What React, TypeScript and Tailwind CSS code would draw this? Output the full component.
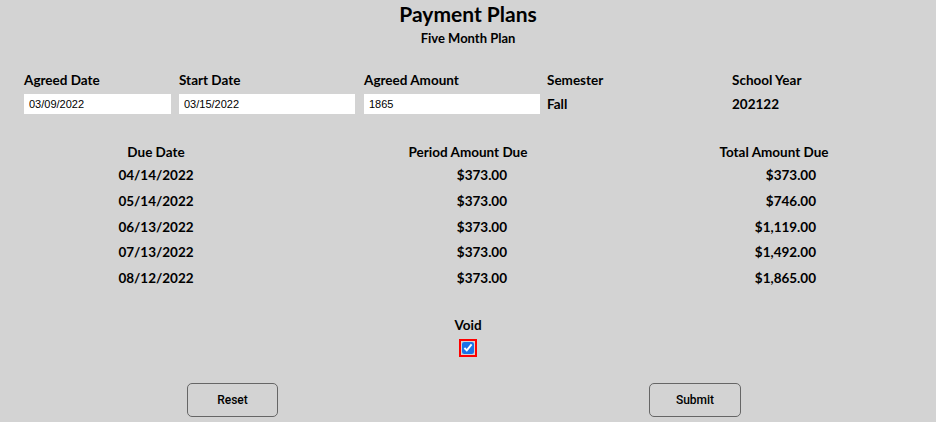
import { useState } from "react";

const rows = [
  { due: "04/14/2022", period: "$373.00", total: "$373.00" },
  { due: "05/14/2022", period: "$373.00", total: "$746.00" },
  { due: "06/13/2022", period: "$373.00", total: "$1,119.00" },
  { due: "07/13/2022", period: "$373.00", total: "$1,492.00" },
  { due: "08/12/2022", period: "$373.00", total: "$1,865.00" },
];

const gothic = "font-['Lato','DejaVu_Sans',sans-serif] font-bold";

export default function App() {
  const [voided, setVoided] = useState(true);
  return (
    <div className={`h-[422px] w-[936px] overflow-hidden bg-[#d3d3d3] text-black ${gothic}`}>
      <div className="pt-[2px] text-center text-[21px] leading-[24px]">Payment Plans</div>
      <div className="mt-[4px] text-center text-[13px] leading-[16px]">Five Month Plan</div>

      <div className="mt-[26px] flex pl-[24px] text-[13.5px]">
        <div className="w-[155px]">
          <div className="leading-[16px]">Agreed Date</div>
          <input
            readOnly
            value="03/09/2022"
            className="mt-[6px] h-[20px] w-[147px] bg-white px-[5px] font-['Liberation_Sans',sans-serif] text-[11px] font-normal outline-none"
          />
        </div>
        <div className="w-[185px]">
          <div className="leading-[16px]">Start Date</div>
          <input
            readOnly
            value="03/15/2022"
            className="mt-[6px] h-[20px] w-[176px] bg-white px-[5px] font-['Liberation_Sans',sans-serif] text-[11px] font-normal outline-none"
          />
        </div>
        <div className="w-[183px]">
          <div className="leading-[16px]">Agreed Amount</div>
          <input
            readOnly
            value="1865"
            className="mt-[6px] h-[20px] w-[176px] bg-white px-[5px] font-['Liberation_Sans',sans-serif] text-[11px] font-normal outline-none"
          />
        </div>
        <div className="w-[185px]">
          <div className="leading-[16px]">Semester</div>
          <div className="mt-[6px] leading-[20px]">Fall</div>
        </div>
        <div>
          <div className="leading-[16px]">School Year</div>
          <div className="mt-[6px] leading-[20px]">202122</div>
        </div>
      </div>

      <div className="mt-[30px] grid grid-cols-3 text-[13.5px] leading-[16px]">
        <div className="text-center">Due Date</div>
        <div className="text-center">Period Amount Due</div>
        <div className="pr-[12px] text-center">Total Amount Due</div>
      </div>
      <div className="mt-[7px] flex flex-col gap-[9.75px]">
        {rows.map((r) => (
          <div key={r.due} className="grid grid-cols-3 text-[13.5px] leading-[16px]">
            <div className="text-center">{r.due}</div>
            <div className="pr-[117px] text-right">{r.period}</div>
            <div className="pr-[120px] text-right">{r.total}</div>
          </div>
        ))}
      </div>

      <div className="mt-[31px] flex flex-col items-center">
        <div className="text-[13.5px] leading-[16px]">Void</div>
        <div className="mt-[6px] flex h-[18px] w-[18px] items-center justify-center border-2 border-[#ff0000]">
          <input
            type="checkbox"
            checked={voided}
            onChange={(e) => setVoided(e.target.checked)}
            className="m-0 h-[12px] w-[12px] accent-[#1a73e8]"
          />
        </div>
      </div>

      <div className="mt-[26px] flex pl-[187px]">
        <button className="h-[34px] w-[91px] rounded-[5px] border border-[#666] font-['Roboto',sans-serif] text-[12px] font-medium">
          Reset
        </button>
        <button className="ml-[371px] h-[34px] w-[92px] rounded-[5px] border border-[#666] font-['Roboto',sans-serif] text-[12px] font-medium">
          Submit
        </button>
      </div>
    </div>
  );
}
